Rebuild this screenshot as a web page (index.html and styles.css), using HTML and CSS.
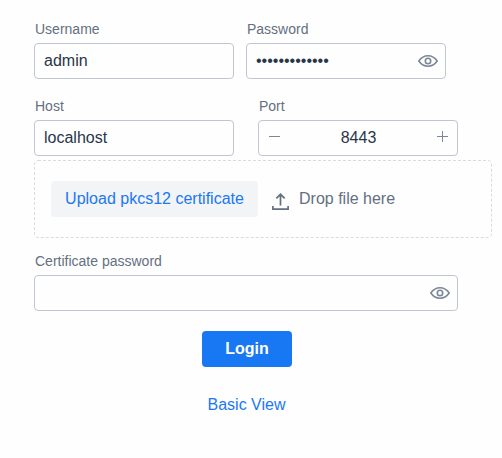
FILE: index.html
```html
<!DOCTYPE html>
<html lang="en">
<head>
<meta charset="utf-8">
<title>Login</title>
<link rel="stylesheet" href="styles.css">
</head>
<body>
<form class="login">
  <div class="row">
    <label class="field"><span class="label">Username</span>
      <span class="box"><span class="value">admin</span></span></label>
    <label class="field"><span class="label">Password</span>
      <span class="box"><span class="value dots">•••••••••••••</span>
        <svg class="eye" viewBox="0 0 20 12"><path d="M.8 6C3.300 2.500 6.300.8 10 .8S16.700 2.500 19.200 6C16.700 9.500 13.700 11.200 10 11.200S3.300 9.500.8 6Z"/><circle cx="10" cy="6" r="2.700"/></svg></span></label>
  </div>
  <div class="row row-host">
    <label class="field"><span class="label">Host</span>
      <span class="box"><span class="value">localhost</span></span></label>
    <label class="field"><span class="label">Port</span>
      <span class="box stepper">
        <svg class="sign" viewBox="0 0 11 11"><path d="M0 5.500H11"/></svg>
        <span>8443</span>
        <svg class="sign" viewBox="0 0 11 11"><path d="M0 5.500H11M5.500 0V11"/></svg></span></label>
  </div>
  <div class="drop">
    <svg class="outline" viewBox="0 0 458 78"><rect x=".5" y=".5" width="457" height="77" rx="3.500"/></svg>
    <button type="button" class="upload">Upload pkcs12 certificate</button>
    <svg class="arrow" viewBox="0 0 17 18"><path d="M8.500 12.500V1.500M4.300 5.400 8.500 1.300 12.700 5.400M.9 13V16.100H16.100V13"/></svg>
    <span>Drop file here</span>
  </div>
  <label class="field wide"><span class="label">Certificate password</span>
    <span class="box"><span class="value"></span>
      <svg class="eye" viewBox="0 0 20 12"><path d="M.8 6C3.300 2.500 6.300.8 10 .8S16.700 2.500 19.200 6C16.700 9.500 13.700 11.200 10 11.200S3.300 9.500.8 6Z"/><circle cx="10" cy="6" r="2.700"/></svg></span></label>
  <button type="button" class="submit">Login</button>
  <a class="basic">Basic View</a>
</form>
</body>
</html>
```
FILE: styles.css
```css
* { box-sizing: border-box; }
body {
  margin: 0;
  background: #fefefe;
  color: #283649;
  font: 16px/20px "Liberation Sans", Arial, sans-serif;
}
svg { flex: none; fill: none; }
.login {
  display: flex;
  flex-direction: column;
  align-items: flex-start;
  width: 458px;
  margin: 19px 0 0 34px;
}
.row { display: flex; gap: 12px; }
.row-host { gap: 24px; margin-top: 17px; }
.field { display: block; width: 200px; }
.label {
  display: block;
  height: 24px;
  padding-left: 1px;
  color: #647081;
  font-size: 14px;
}
.box {
  display: flex;
  align-items: center;
  height: 36px;
  padding: 0 7px 0 9px;
  border: 1px solid #bfc6d1;
  border-radius: 4px;
}
.value { flex: 1; }
.dots { padding-bottom: 1px; }
.eye { width: 20px; height: 12px; stroke: #7b8797; stroke-width: 1.6; }
.stepper { justify-content: space-between; padding: 0 9px 0 10px; }
.sign { width: 11px; height: 11px; margin-top: -3px; stroke: #7b8797; stroke-width: 1; }
.drop {
  position: relative;
  display: flex;
  align-items: center;
  width: 458px;
  height: 78px;
  margin-top: 4px;
  padding-left: 17px;
  color: #647081;
}
.outline {
  position: absolute;
  inset: 0;
  width: 458px;
  height: 78px;
  stroke: #d8dce2;
  stroke-dasharray: 3 2;
  pointer-events: none;
}
button { padding: 0; border: 0; border-radius: 4px; font: inherit; }
.upload { width: 207px; height: 36px; background: #f3f4f6; color: #1a78f4; }
.arrow { width: 17px; height: 18px; margin: 5px 10px 0 14px; stroke: #647081; stroke-width: 1.7; }
.wide { width: 424px; margin-top: 13px; }
.submit {
  width: 90px;
  height: 36px;
  margin: 20px 0 0 168px;
  background: #1877f3;
  color: #fff;
  font-weight: bold;
}
.basic { width: 78px; margin: 28px 0 0 173.5px; color: #1a78f4; white-space: nowrap; }
```
